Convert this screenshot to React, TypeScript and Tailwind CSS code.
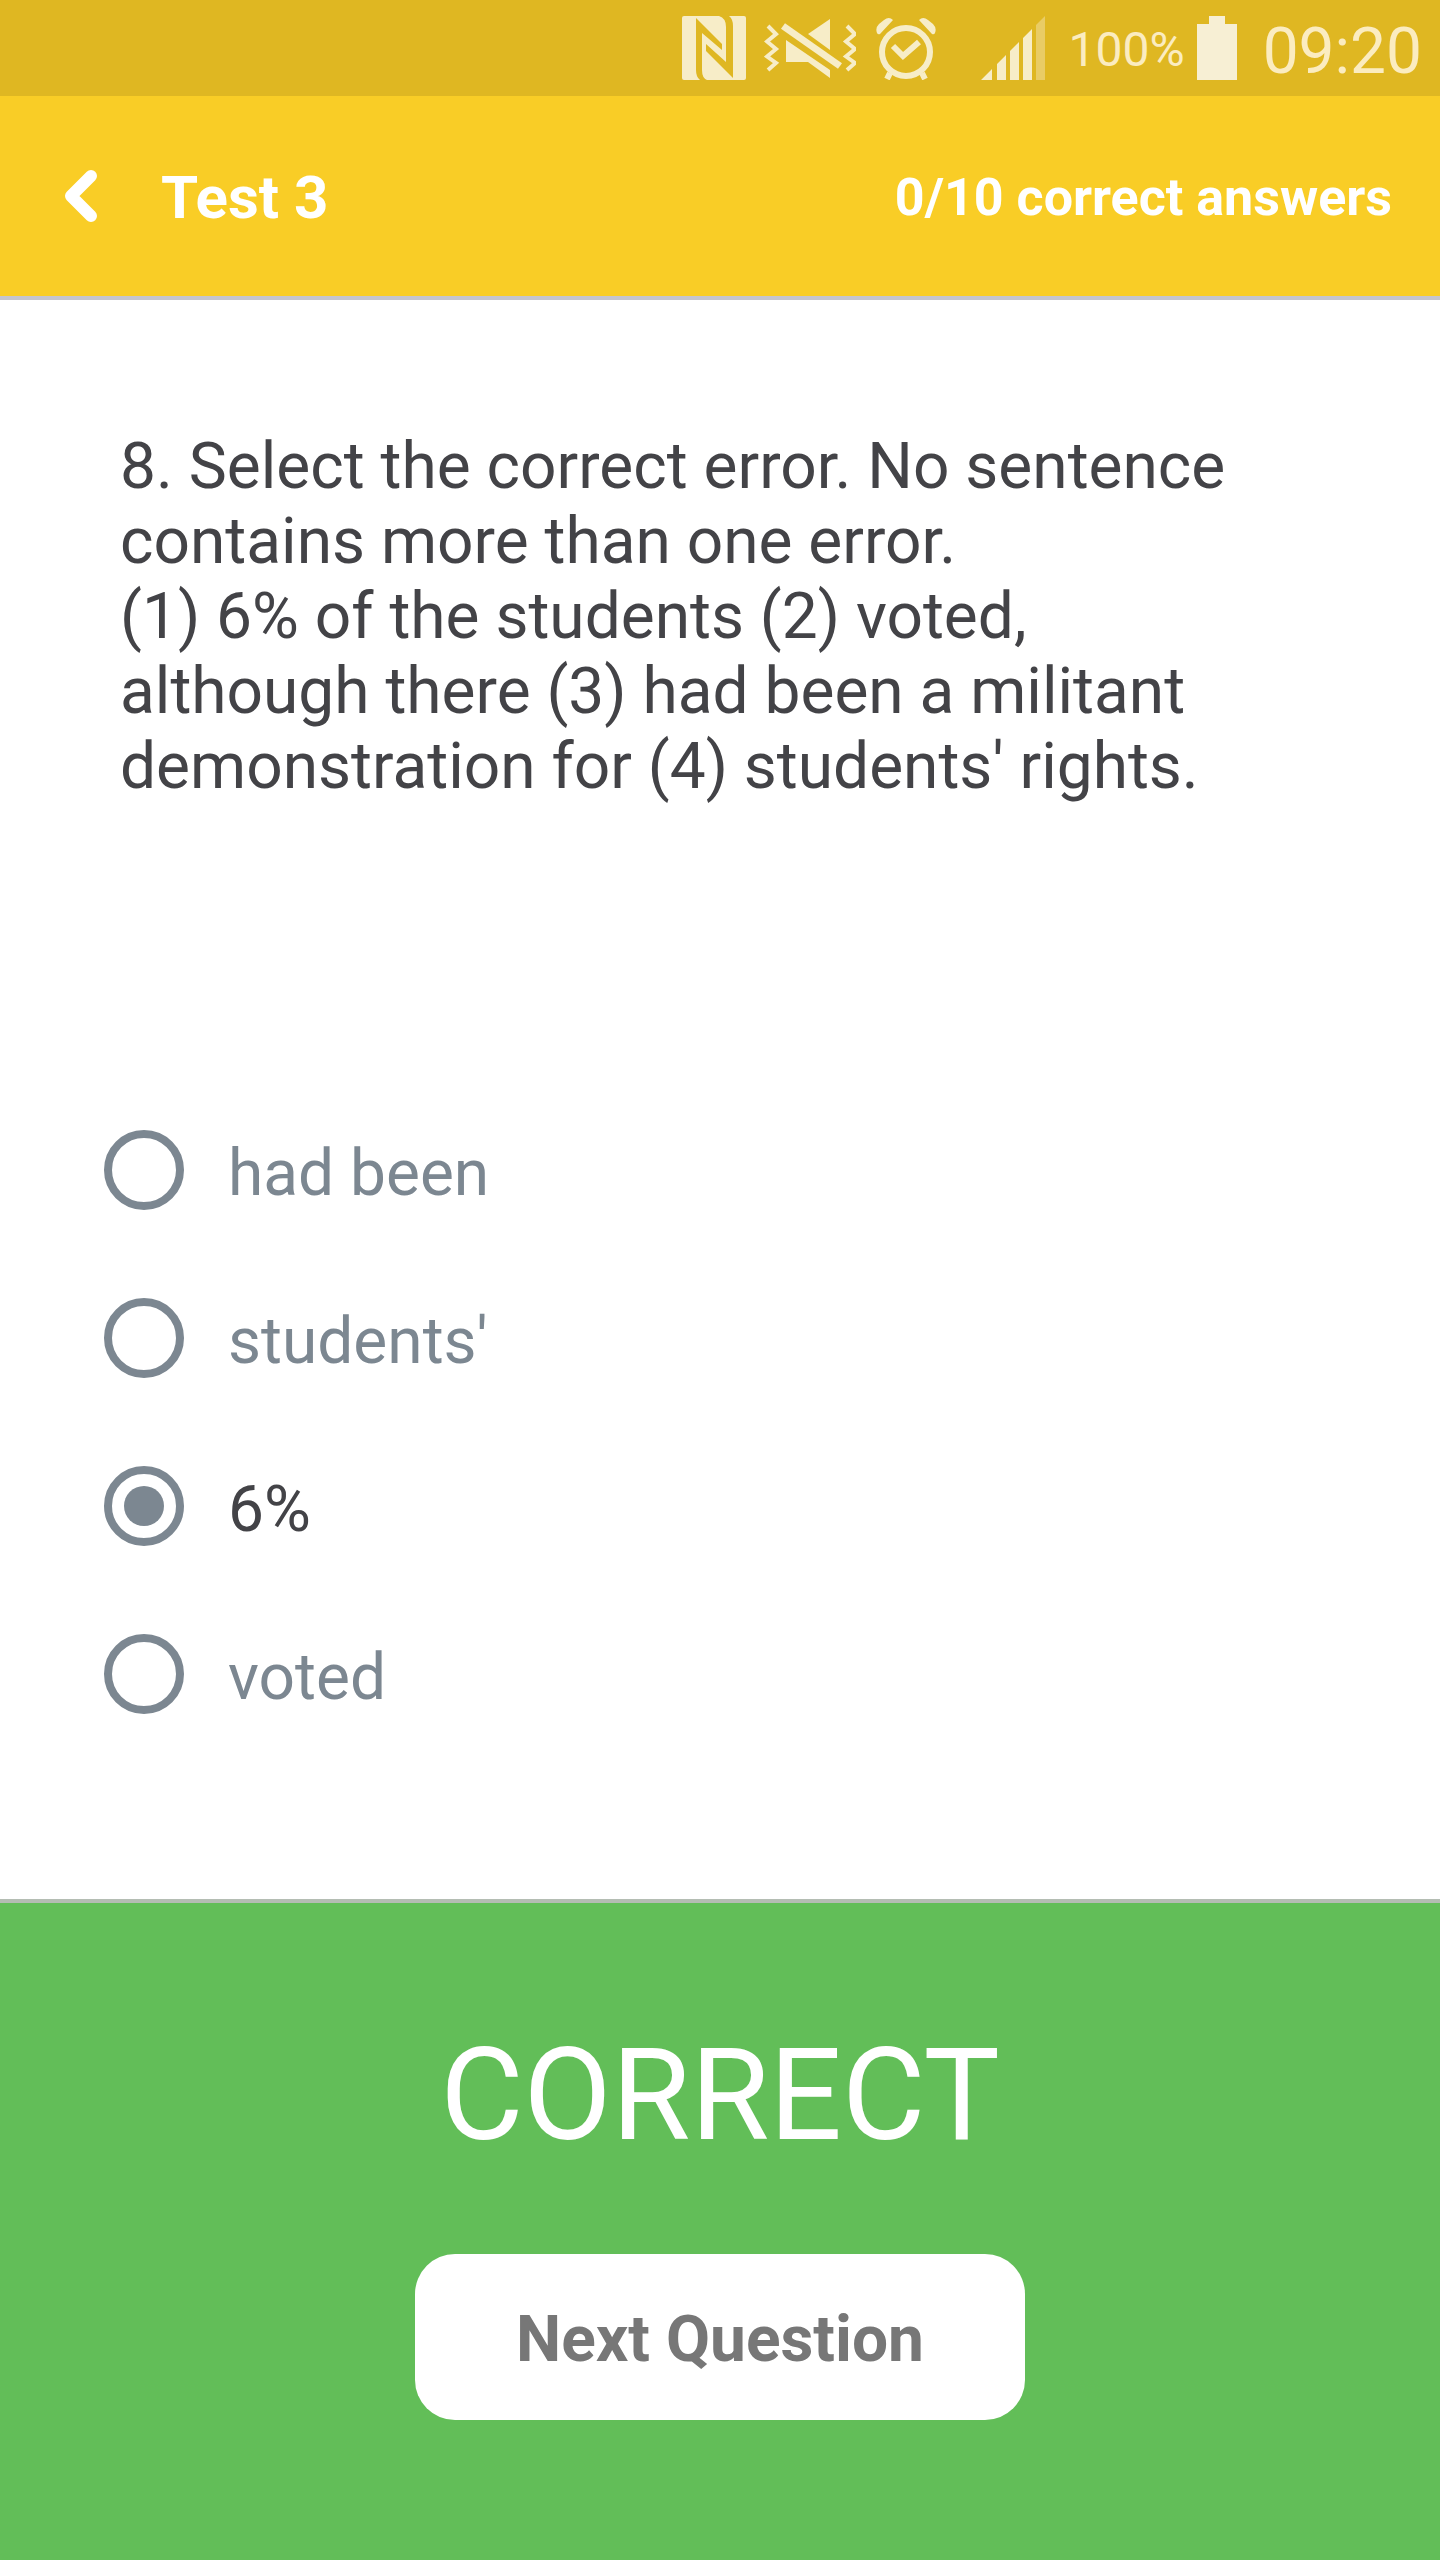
import { useState } from "react";

const answers = ["had been", "students'", "6%", "voted"];

function NfcIcon() {
  return (
    <svg className="h-16 w-16" viewBox="0 0 64 64" aria-hidden="true">
      <rect width="64" height="64" rx="2" fill="#F7EDC8" />
      <path d="M14 2L40 28V34L20 17V54Q20 62 25 64H18Q14 61 14 54Z" fill="#DFB722" />
      <path d="M51 62L24 35V28L44 46V11Q44 2 37 0H47Q51 3 51 10Z" fill="#DFB722" />
    </svg>
  );
}

function VibrateMuteIcon() {
  return (
    <svg className="h-16 w-[92px]" viewBox="0 0 92 64" aria-hidden="true">
      <g fill="none" stroke="#F7EDC8" strokeWidth="4">
        <path d="M4 10L12 18L3 25.500L12 33L3 40.500L12 47L4 54" />
        <path d="M83 10L91 18L82 25.500L91 33L82 40.500L91 47L83 54" />
      </g>
      <path d="M22 24L66 54V62L44 46H22Z" fill="#F7EDC8" />
      <path d="M66 3V34L44 18Z" fill="#F7EDC8" />
      <path d="M19 10L76 50" stroke="#F7EDC8" strokeWidth="7" />
    </svg>
  );
}

function AlarmIcon() {
  return (
    <svg className="h-16 w-[60px]" viewBox="0 0 60 64" fill="none" stroke="#F7EDC8" aria-hidden="true">
      <path d="M14 57L11 63M46 57L49 63" strokeWidth="6" />
      <circle cx="30" cy="36" r="24" strokeWidth="6" />
      <path d="M17 30L27 40L43 26" strokeWidth="6" />
      <path d="M1 17Q-1 12 3 8L8 4Q13 0 17 4L4 18Q2 19 1 17ZM59 17Q61 12 57 8L52 4Q47 0 43 4L56 18Q58 19 59 17Z" fill="#F7EDC8" stroke="none" />
    </svg>
  );
}

function SignalIcon() {
  return (
    <svg className="h-16 w-16" viewBox="0 0 64 64" fill="#F7EDC8" aria-hidden="true">
      <path d="M0 64L11 53V64ZM16 48L25 39V64H16ZM29 35L38 26V64H29ZM42 22L51 13V64H42Z" />
      <path d="M55 9L64 0V64H55Z" fill="#E9CC65" />
    </svg>
  );
}

function BatteryIcon() {
  return (
    <svg className="h-16 w-10" viewBox="0 0 40 64" fill="#F7EFD4" aria-hidden="true">
      <path d="M12 0H28V8H40V64H0V8H12Z" />
    </svg>
  );
}

export default function App() {
  const [selected, setSelected] = useState("6%");

  return (
    <div className="flex min-h-screen flex-col bg-white font-[Roboto,sans-serif] text-[#434347]">
      <div className="flex h-24 items-center justify-end bg-[#DFB722] pr-[18px] text-[#FBECC0]">
        <NfcIcon />
        <div className="ml-[18px] flex"><VibrateMuteIcon /></div>
        <div className="ml-5 flex"><AlarmIcon /></div>
        <div className="ml-[45px] flex"><SignalIcon /></div>
        <span className="ml-6 pt-1 text-5xl">100%</span>
        <div className="ml-3 flex"><BatteryIcon /></div>
        <time className="ml-[26px] pt-2 text-[64px] leading-none">09:20</time>
      </div>

      <header className="flex h-[204px] items-center border-b-4 border-[#C5C5CE] bg-[#F9CD26] pr-12 pl-16 font-bold text-white">
        <button type="button" aria-label="Back" className="flex">
          <svg className="h-[52px] w-[33px]" viewBox="0 0 33 52" fill="none" stroke="white" strokeWidth="12" strokeLinecap="round" strokeLinejoin="round" aria-hidden="true">
            <path d="M27 6L7 26L27 46" />
          </svg>
        </button>
        <h1 className="ml-16 pt-1 text-[60px] leading-[72px]">Test 3</h1>
        <p className="ml-auto pt-1 text-[52px] leading-[72px]">0/10 correct answers</p>
      </header>

      <main className="grow px-[104px] pt-[129px]">
        <p className="max-w-[1160px] pl-4 text-[64px] leading-[75px]">
          8. Select the correct error. No sentence contains more than one error.
          <br />
          (1) 6% of the students (2) voted, although there (3) had been a militant demonstration for (4) students' rights.
        </p>
        <div role="radiogroup" aria-label="Answer" className="mt-[282px] flex flex-col">
          {answers.map((answer) => (
            <label key={answer} className="flex h-[168px] items-center gap-11 text-[64px] leading-[75px] text-[#7C8791] has-checked:text-[#434347]">
              <input
                type="radio"
                name="answer"
                value={answer}
                checked={selected === answer}
                onChange={() => setSelected(answer)}
                className="size-20 appearance-none rounded-full border-8 border-[#7C8791] bg-white bg-clip-content p-3 checked:bg-[#7C8791]"
              />
              <span className="pt-1.5">{answer}</span>
            </label>
          ))}
        </div>
      </main>

      <footer className="flex flex-col items-center border-t-4 border-[#B4BDB3] bg-[#62BE58] pt-[117px] pb-[140px]">
        <p className="text-[128px] leading-[150px] text-white">CORRECT</p>
        <button type="button" className="mt-[84px] rounded-[40px] bg-white px-[101px] pt-12 pb-[42px] text-[64px] leading-[76px] font-bold text-[#777777]">
          Next Question
        </button>
      </footer>
    </div>
  );
}
